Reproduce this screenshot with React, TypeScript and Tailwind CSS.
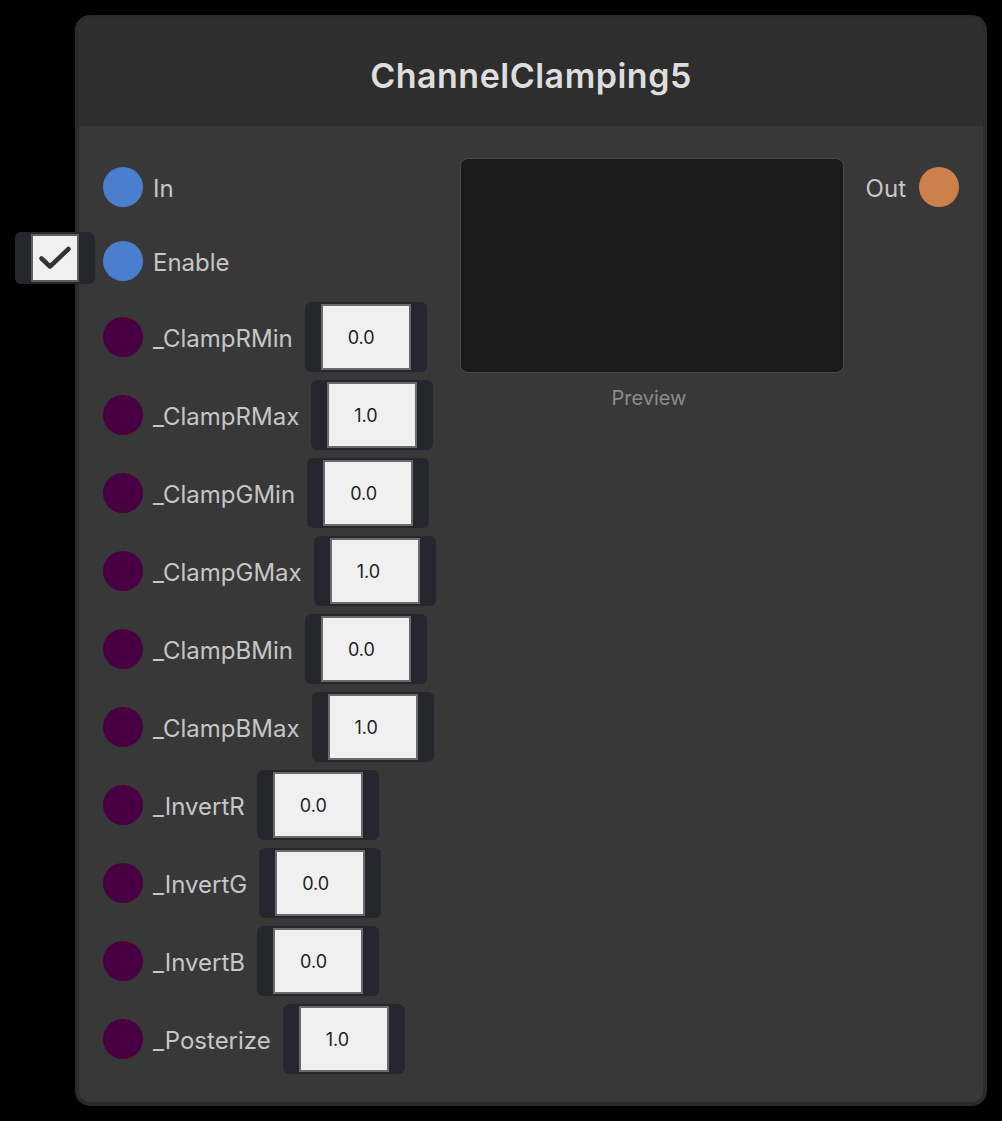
import React from "react";

// A single input port row of the node
interface InputPort {
  name: string;
  value: string;
}

const inputs: InputPort[] = [
  { name: "_ClampRMin", value: "0.0" },
  { name: "_ClampRMax", value: "1.0" },
  { name: "_ClampGMin", value: "0.0" },
  { name: "_ClampGMax", value: "1.0" },
  { name: "_ClampBMin", value: "0.0" },
  { name: "_ClampBMax", value: "1.0" },
  { name: "_InvertR", value: "0.0" },
  { name: "_InvertG", value: "0.0" },
  { name: "_InvertB", value: "0.0" },
  { name: "_Posterize", value: "1.0" },
];

const Port = ({ color }: { color: string }) => (
  <div className={`w-[40px] h-[40px] rounded-full shrink-0 ${color}`} />
);

const Label = ({ children, className = "" }: { children: React.ReactNode; className?: string }) => (
  <span className={`pt-[4px] text-[24px] text-[#c6c6c6] ${className}`}>{children}</span>
);

const FloatField = ({ value }: { value: string }) => (
  <div className="ml-[12px] w-[122px] h-[70px] rounded-[6px] bg-[#26272e] px-[16px] py-[2px]">
    <div className="h-full w-full border-2 border-[#6a6a6a] bg-[#f0f0f0] flex items-center pl-[25px] text-[18px] text-[#222222]">
      {value}
    </div>
  </div>
);

const App: React.FC = () => {
  return (
    <div
      className="min-h-screen bg-black pl-[75px] pt-[15px]"
      style={{ fontFamily: "Inter, 'Noto Sans', sans-serif" }}
    >
      <div className="relative w-[912px] rounded-[15px] border-[4px] border-[#2b2b2b] bg-[#383838]">
        {/* Title */}
        <div className="h-[107px] rounded-t-[11px] bg-[#2e2e2e] flex items-center justify-center pt-[5px]">
          <span className="text-[34px] font-semibold text-[#dedede] tracking-[0.5px]">
            ChannelClamping5
          </span>
        </div>

        {/* Body */}
        <div className="flex px-[24px] pt-[28px] pb-[28px]">
          {/* Inputs */}
          <div className="w-[333px] flex flex-col gap-[8px]">
            <div className="h-[66px] flex items-center">
              <Port color="bg-[#4a7fcf]" />
              <Label className="ml-[10px]">In</Label>
            </div>
            <div className="relative h-[66px] flex items-center">
              <div className="absolute left-[-88px] top-[4px] w-[80px] h-[52px] rounded-[6px] bg-[#26272e] pl-[16px] pt-[2px]">
                <div className="w-[48px] h-[48px] border-2 border-[#5e5e5e] bg-[#f0f0f0] flex items-center justify-center">
                  <svg width="34" height="26" viewBox="0 0 34 26">
                    <path
                      d="M3.5 13.5 L12 21.5 L30.5 4"
                      fill="none"
                      stroke="#333333"
                      strokeWidth="4.5"
                      strokeLinecap="round"
                      strokeLinejoin="round"
                    />
                  </svg>
                </div>
              </div>
              <Port color="bg-[#4a7fcf]" />
              <Label className="ml-[10px]">Enable</Label>
            </div>
            {inputs.map((p) => (
              <div key={p.name} className="h-[70px] flex items-center">
                <Port color="bg-[#480042]" />
                <Label className="ml-[10px]">{p.name}</Label>
                <FloatField value={p.value} />
              </div>
            ))}
          </div>

          {/* Preview */}
          <div className="ml-[24px] w-[384px] pt-[4px] flex flex-col items-center">
            <div className="w-full h-[215px] rounded-[8px] border border-[#4a4a4a] bg-[#1b1b1b]" />
            <span className="mt-[10px] pr-[6px] text-[20px] text-[#8c8c8c]">Preview</span>
          </div>

          {/* Outputs */}
          <div className="flex-1">
            <div className="h-[66px] flex items-center justify-end">
              <Label className="mr-[13px]">Out</Label>
              <Port color="bg-[#cd804c]" />
            </div>
          </div>
        </div>
      </div>
    </div>
  );
};

export default App;
